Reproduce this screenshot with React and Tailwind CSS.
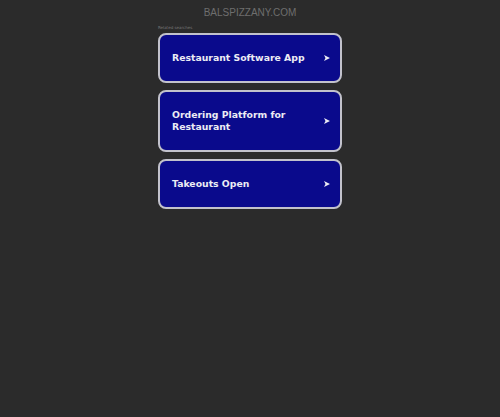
export default function App() {
  const links = ['Restaurant Software App', 'Ordering Platform for Restaurant', 'Takeouts Open'];

  return (
    <div className="min-h-[417px] bg-[#2b2b2b] font-['DejaVu_Sans',sans-serif]">
      <div className="pt-[7px] text-center font-['Liberation_Sans',sans-serif] text-[10px] leading-[12px] text-[#6e6e6e]">
        BALSPIZZANY.COM
      </div>
      <div className="mx-auto mt-[6px] w-[184px]">
        <p className="text-[4px] leading-[5px] text-[#777]">Related searches</p>
        <div className="mt-[3px] flex flex-col gap-[7px]">
          {links.map((label) => (
            <a
              key={label}
              href="#"
              className="flex items-center justify-between rounded-[8px] border-2 border-[#c2c2cc] bg-[#0a0a8c] py-[17px] pl-[12px] pr-[9px]"
            >
              <span className="max-w-[140px] text-[9.3px] leading-[12px] font-bold text-[#ececf4]">{label}</span>
              <svg width="8" height="8" viewBox="0 0 8 8">
                <path d="M1 1 L7 4 L1 7 L2.5 4 Z" fill="#ececf4" />
              </svg>
            </a>
          ))}
        </div>
      </div>
    </div>
  );
}
